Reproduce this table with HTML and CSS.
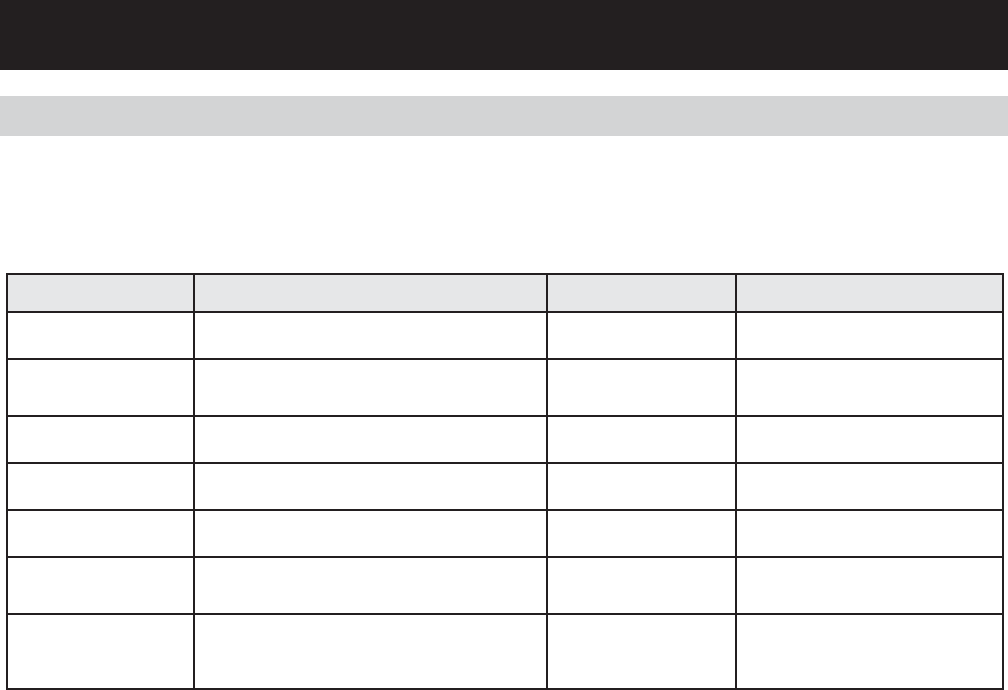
FILE: index.html
```html
<!DOCTYPE html>
<html>
<head>
<meta charset="utf-8">
<link rel="stylesheet" href="styles.css">
</head>
<body>
<header class="topbar"></header>
<div class="subbar"></div>
<main class="content">
<table class="grid">
<colgroup>
<col class="c1"><col class="c2"><col class="c3"><col class="c4">
</colgroup>
<thead>
<tr class="h"><th></th><th></th><th></th><th></th></tr>
</thead>
<tbody>
<tr class="r47"><td></td><td></td><td></td><td></td></tr>
<tr class="r57"><td></td><td></td><td></td><td></td></tr>
<tr class="r47"><td></td><td></td><td></td><td></td></tr>
<tr class="r47"><td></td><td></td><td></td><td></td></tr>
<tr class="r47"><td></td><td></td><td></td><td></td></tr>
<tr class="r57"><td></td><td></td><td></td><td></td></tr>
<tr class="r75"><td></td><td></td><td></td><td></td></tr>
</tbody>
</table>
</main>
</body>
</html>
```
FILE: styles.css
```css
html, body {
  margin: 0;
  padding: 0;
  background: #ffffff;
  font-family: "Liberation Sans", Arial, sans-serif;
}
.topbar {
  height: 70px;
  background: #231f20;
}
.subbar {
  height: 40px;
  margin-top: 26px;
  background: #d3d4d5;
}
.content {
  padding: 137px 6px 0 6px;
}
.grid {
  width: 996px;
  border-collapse: collapse;
  table-layout: fixed;
}
.grid th, .grid td {
  border: 2px solid #231f20;
  padding: 0;
}
.grid th {
  background: #e6e7e8;
}
.c1 { width: 187px; }
.c2 { width: 353px; }
.c3 { width: 189px; }
.c4 { width: 267px; }
.h { height: 38px; }
.r47 { height: 47px; }
.r57 { height: 57px; }
.r75 { height: 75px; }
```
